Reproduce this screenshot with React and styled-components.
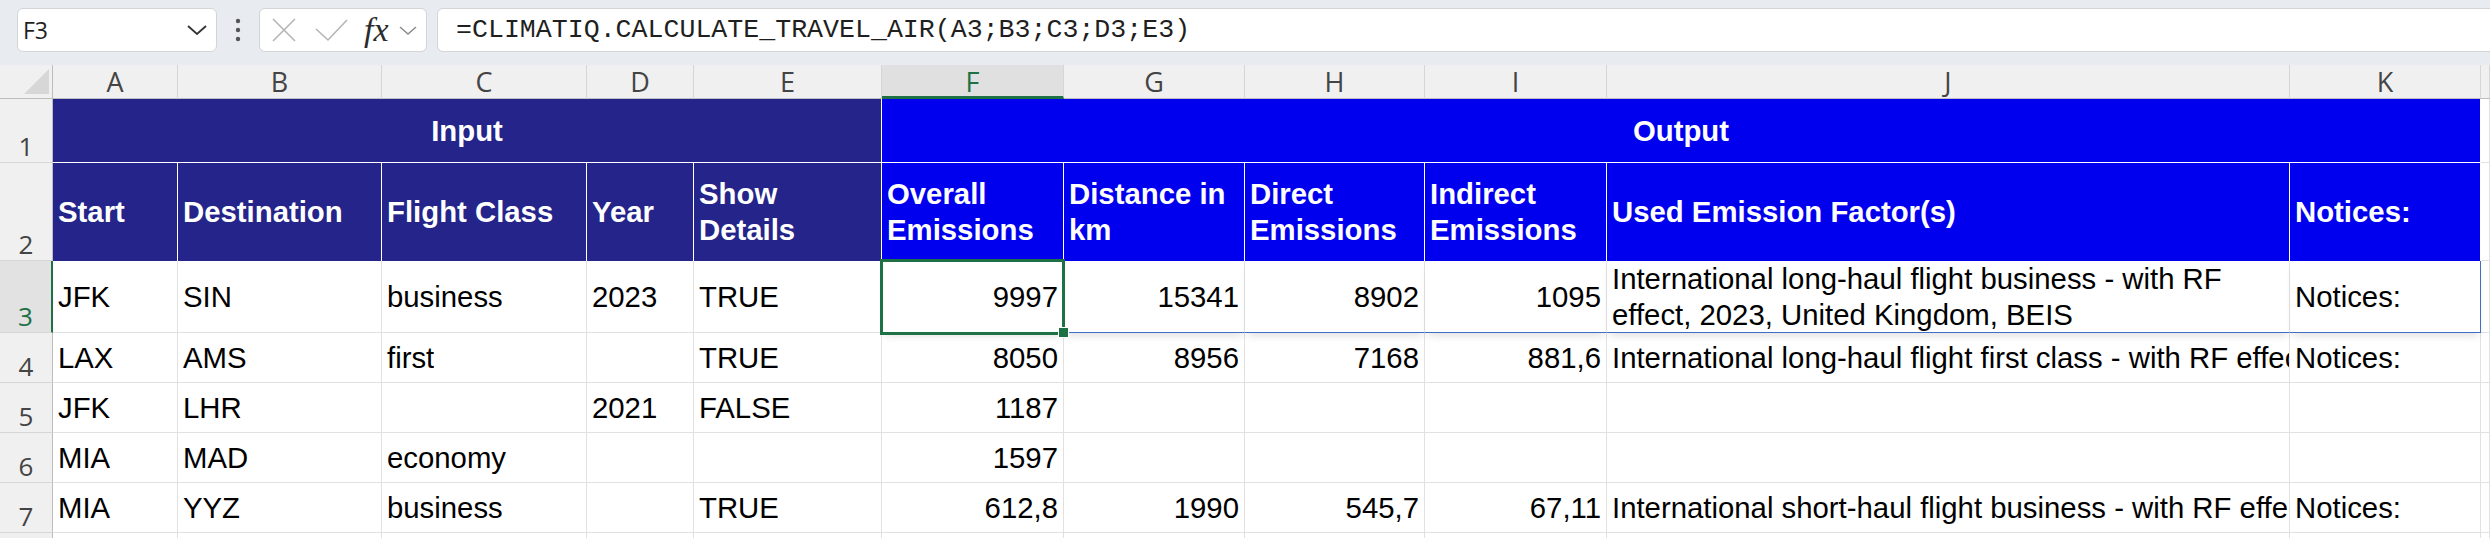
import { Fragment } from 'react';
import styled, { createGlobalStyle, css } from 'styled-components';

const GREEN = '#1e7145';
const GRID = '#e1e1e1';
const HEAD_LINE = '#bdbdbd';
const NAVY = '#24248a';
const BLUE = '#0000ee';
const FOCUS = '#3d6fc6';
const CELL_FONT = `"Liberation Sans", Arial, sans-serif`;
const UI_FONT = `"Open Sans", "Noto Sans", sans-serif`;

const GlobalStyle = createGlobalStyle`
  html, body {
    margin: 0;
    padding: 0;
    overflow: hidden;
    background: #fff;
  }
  body {
    font-family: ${CELL_FONT};
  }
  * {
    box-sizing: border-box;
  }
`;

const Window = styled.div`
  width: 2490px;
  height: 538px;
  overflow: hidden;
  background: #fff;
`;

const Toolbar = styled.div`
  display: flex;
  align-items: center;
  height: 65px;
  padding: 8px 0 13px 17px;
  background: #e8ebef;
`;

const NameBox = styled.div`
  display: flex;
  align-items: center;
  justify-content: space-between;
  width: 200px;
  height: 44px;
  padding: 0 9px 0 5px;
  background: #fff;
  border: 1px solid #d2d4d8;
  border-radius: 6px;
  font-family: ${UI_FONT};
  font-size: 23px;
  color: #1f1f1f;
`;

const DotsSlot = styled.div`
  display: flex;
  align-items: center;
  justify-content: center;
  width: 42px;
  height: 44px;
`;

const FxBox = styled.div`
  display: flex;
  align-items: center;
  width: 168px;
  height: 44px;
  padding-left: 12px;
  background: #fff;
  border: 1px solid #d2d4d8;
  border-radius: 6px;
`;

const IconSlot = styled.span`
  display: inline-flex;
  align-items: center;
  margin-left: ${p => p.$ml || 0}px;
`;

const FxGlyph = styled.span`
  margin-left: 16px;
  font-family: "Liberation Serif", "Times New Roman", serif;
  font-style: italic;
  font-size: 34px;
  line-height: 1;
  color: #2b2b2b;
`;

const FormulaBox = styled.div`
  flex: 1;
  display: flex;
  align-items: center;
  height: 44px;
  margin: 0 -20px 0 10px;
  padding-left: 18px;
  background: #fff;
  border: 1px solid #d2d4d8;
  border-radius: 6px;
  font-family: "Liberation Mono", "DejaVu Sans Mono", monospace;
  font-size: 26.6px;
  color: #1f1f1f;
  white-space: nowrap;
`;

const Sheet = styled.div`
  display: grid;
  grid-template-columns: 53px 125px 204px 205px 107px 188px 182px 181px 180px 182px 683px 191px 1fr;
  grid-template-rows: 34px 64px 98px 72px 50px 50px 50px 50px 50px;
`;

const Corner = styled.div`
  display: flex;
  align-items: flex-end;
  justify-content: flex-end;
  padding: 0 2px 3px 0;
  background: #f0f0f0;
  border-right: 1px solid ${HEAD_LINE};
  border-bottom: 1px solid ${HEAD_LINE};
`;

const ColHead = styled.div`
  display: flex;
  align-items: center;
  justify-content: center;
  background: ${p => (p.$active ? '#e0e0e0' : '#f0f0f0')};
  border-right: 1px solid #d6d6d6;
  border-bottom: ${p => (p.$active ? `3px solid ${GREEN}` : `1px solid ${HEAD_LINE}`)};
  font-family: ${UI_FONT};
  font-size: 27px;
  color: ${p => (p.$active ? GREEN : '#444')};
  ${p => p.$active && css`padding-top: 2px;`}
`;

const RowHead = styled.div`
  display: flex;
  align-items: flex-end;
  justify-content: center;
  background: ${p => (p.$active ? '#e2e2e2' : '#f0f0f0')};
  border-right: ${p => (p.$active ? `2px solid ${GREEN}` : `1px solid ${HEAD_LINE}`)};
  border-bottom: 1px solid #d6d6d6;
  font-family: ${UI_FONT};
  font-size: 26px;
  line-height: 1.2;
  color: ${p => (p.$active ? GREEN : '#444')};
`;

const Band = styled.div`
  grid-column: span ${p => p.$span};
  display: flex;
  align-items: center;
  justify-content: center;
  background: ${p => (p.$tone === 'input' ? NAVY : BLUE)};
  border-right: 1px solid #fff;
  border-bottom: 1px solid #fff;
  color: #fff;
  font-size: 29.33px;
  font-weight: 700;
`;

const HeadCell = styled.div`
  display: flex;
  align-items: center;
  padding: 0 5px;
  background: ${p => (p.$tone === 'input' ? NAVY : BLUE)};
  border-right: 1px solid #fff;
  color: #fff;
  font-size: 29.33px;
  font-weight: 700;
  line-height: 36px;
`;

const Cell = styled.div`
  position: relative;
  display: flex;
  align-items: center;
  justify-content: ${p => (p.$num ? 'flex-end' : 'flex-start')};
  min-width: 0;
  padding: ${p => (p.$num || p.$wrap ? '0 5px' : '0 0 0 5px')};
  background: #fff;
  border-right: 1px solid ${GRID};
  border-bottom: 1px solid ${GRID};
  color: #000;
  font-size: 29.33px;
  line-height: 36px;

  ${p => p.$focus && css`
    z-index: 1;
    border-bottom-color: ${FOCUS};
    box-shadow: 0 6px 8px -3px rgba(0, 0, 0, 0.12);
  `}
  ${p => p.$edge && css`
    border-right-color: ${FOCUS};
  `}
  ${p => p.$selected && css`
    z-index: 2;
    &::before {
      content: '';
      position: absolute;
      inset: -2px -2px -3px -2px;
      border: 3px solid ${GREEN};
      pointer-events: none;
    }
    &::after {
      content: '';
      position: absolute;
      right: -6px;
      bottom: -6px;
      width: 9px;
      height: 9px;
      background: ${GREEN};
      border: 1px solid #fff;
    }
  `}
`;

const CellText = styled.span`
  min-width: 0;
  overflow: hidden;
  white-space: ${p => (p.$wrap ? 'normal' : 'nowrap')};
`;

const letters = ['A', 'B', 'C', 'D', 'E', 'F', 'G', 'H', 'I', 'J', 'K'];
const inputHeads = ['Start', 'Destination', 'Flight Class', 'Year', 'Show Details'];
const outputHeads = ['Overall Emissions', 'Distance in km', 'Direct Emissions', 'Indirect Emissions', 'Used Emission Factor(s)', 'Notices:'];

const rows = [
  { n: 3, cells: ['JFK', 'SIN', 'business', '2023', 'TRUE', '9997', '15341', '8902', '1095', 'International long-haul flight business - with RF effect, 2023, United Kingdom, BEIS', 'Notices:'] },
  { n: 4, cells: ['LAX', 'AMS', 'first', '', 'TRUE', '8050', '8956', '7168', '881,6', 'International long-haul flight first class - with RF effect, 2023, United Kingdom, BEIS', 'Notices:'] },
  { n: 5, cells: ['JFK', 'LHR', '', '2021', 'FALSE', '1187', '', '', '', '', ''] },
  { n: 6, cells: ['MIA', 'MAD', 'economy', '', '', '1597', '', '', '', '', ''] },
  { n: 7, cells: ['MIA', 'YYZ', 'business', '', 'TRUE', '612,8', '1990', '545,7', '67,11', 'International short-haul flight business - with RF effect, 2023, United Kingdom, BEIS', 'Notices:'] },
  { n: 8, cells: ['', '', '', '', '', '', '', '', '', '', ''] },
];

const ACTIVE_ROW = 3;
const ACTIVE_COL = 5;

const App = () => {
  return (
    <Window>
      <GlobalStyle />
      <Toolbar>
        <NameBox>
          F3
          <svg width="20" height="10" viewBox="0 0 20 10">
            <path d="M1 1L10 9L19 1" stroke="#333" strokeWidth="1.8" fill="none" />
          </svg>
        </NameBox>
        <DotsSlot>
          <svg width="6" height="24" viewBox="0 0 6 24">
            <circle cx="3" cy="3" r="2.2" fill="#555" />
            <circle cx="3" cy="12" r="2.2" fill="#555" />
            <circle cx="3" cy="21" r="2.2" fill="#555" />
          </svg>
        </DotsSlot>
        <FxBox>
          <IconSlot>
            <svg width="24" height="24" viewBox="0 0 24 24">
              <path d="M1 1L23 23M23 1L1 23" stroke="#b5b5b5" strokeWidth="1.6" fill="none" />
            </svg>
          </IconSlot>
          <IconSlot $ml={19}>
            <svg width="33" height="23" viewBox="0 0 33 23">
              <path d="M1 10L13 21L32 1" stroke="#b5b5b5" strokeWidth="1.6" fill="none" />
            </svg>
          </IconSlot>
          <FxGlyph>fx</FxGlyph>
          <IconSlot $ml={10}>
            <svg width="18" height="9" viewBox="0 0 18 9">
              <path d="M1 1L9 8L17 1" stroke="#8a8a8a" strokeWidth="1.5" fill="none" />
            </svg>
          </IconSlot>
        </FxBox>
        <FormulaBox>=CLIMATIQ.CALCULATE_TRAVEL_AIR(A3;B3;C3;D3;E3)</FormulaBox>
      </Toolbar>

      <Sheet>
        <Corner>
          <svg width="26" height="26" viewBox="0 0 26 26">
            <polygon points="25,0 25,25 0,25" fill="#d7d7d7" />
          </svg>
        </Corner>
        {letters.map((l, i) => (
          <ColHead key={l} $active={i === ACTIVE_COL}>{l}</ColHead>
        ))}
        <ColHead />

        <RowHead>1</RowHead>
        <Band $tone="input" $span={5}>Input</Band>
        <Band $tone="output" $span={6}>Output</Band>
        <Cell />

        <RowHead>2</RowHead>
        {inputHeads.map(h => (
          <HeadCell key={h} $tone="input">{h}</HeadCell>
        ))}
        {outputHeads.map(h => (
          <HeadCell key={h} $tone="output">{h}</HeadCell>
        ))}
        <Cell />

        {rows.map(r => (
          <Fragment key={r.n}>
            <RowHead $active={r.n === ACTIVE_ROW}>{r.n}</RowHead>
            {r.cells.map((v, i) => {
              const onRow = r.n === ACTIVE_ROW;
              const wrap = onRow && i === 9;
              return (
                <Cell
                  key={i}
                  $num={i >= 5 && i <= 8}
                  $wrap={wrap}
                  $focus={onRow && i >= ACTIVE_COL}
                  $edge={onRow && i === 10}
                  $selected={onRow && i === ACTIVE_COL}
                >
                  <CellText $wrap={wrap}>{v}</CellText>
                </Cell>
              );
            })}
            <Cell />
          </Fragment>
        ))}
      </Sheet>
    </Window>
  );
};

export default App;
